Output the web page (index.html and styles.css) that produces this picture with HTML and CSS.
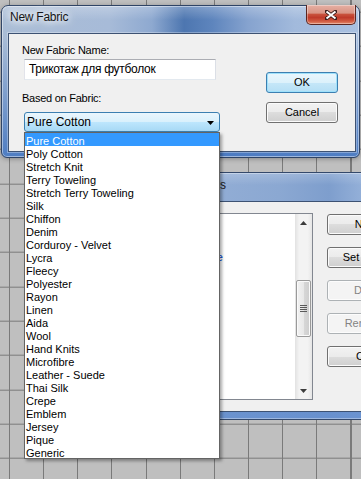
FILE: index.html
```html
<!DOCTYPE html>
<html lang="en">
<head>
<meta charset="utf-8">
<title>New Fabric</title>
<link rel="stylesheet" href="styles.css">
</head>
<body>
  <section class="win back">
    <div class="back-title">Custom Fabrics</div>
    <div class="back-client">
      <div class="listbox">
        <ul class="lb-items">
          <li>Pure Cotton</li>
          <li>Poly Cotton</li>
          <li class="lb-link">Stretch Crepe</li>
        </ul>
        <div class="vscroll">
          <div class="sb-btn"><svg width="7" height="4" viewBox="0 0 7 4"><path d="M3.5 0L7 4H0z" fill="#3c3c3c"/></svg></div>
          <div class="sb-track">
            <div class="sb-thumb"><svg width="7" height="8" viewBox="0 0 7 8"><path d="M0 .5h7M0 2.5h7M0 4.5h7M0 6.5h7" stroke="#5a5a5a" stroke-width="1"/></svg></div>
          </div>
          <div class="sb-btn"><svg width="7" height="4" viewBox="0 0 7 4"><path d="M0 0h7L3.5 4z" fill="#3c3c3c"/></svg></div>
        </div>
      </div>
      <div class="back-buttons">
        <button class="btn btn-wide">New...</button>
        <button class="btn btn-wide">Set Default</button>
        <button class="btn btn-wide" disabled>Delete</button>
        <button class="btn btn-wide" disabled>Rename...</button>
        <button class="btn btn-wide btn-close">Close</button>
      </div>
    </div>
  </section>

  <section class="win dialog">
    <div class="titlebar">
      <span class="title">New Fabric</span>
      <span class="close-x"><svg width="12" height="10" viewBox="0 0 12 10"><path d="M1.5 1.5L10.5 8.5M10.5 1.5L1.5 8.5" stroke="#3a1d1a" stroke-width="3.6" stroke-linecap="round"/><path d="M1.5 1.5L10.5 8.5M10.5 1.5L1.5 8.5" stroke="#fff" stroke-width="2"/></svg></span>
    </div>
    <div class="client">
      <div class="fields">
        <label class="lbl">New Fabric Name:</label>
        <div class="textbox">Трикотаж для футболок</div>
        <label class="lbl lbl-2">Based on Fabric:</label>
        <div class="combo"><span class="combo-text">Pure Cotton</span><svg width="7" height="4" viewBox="0 0 7 4"><path d="M0 0h7L3.5 4z" fill="#000"/></svg></div>
      </div>
      <div class="actions">
        <button class="btn btn-default">OK</button>
        <button class="btn">Cancel</button>
      </div>
    </div>
  </section>

  <ul class="droplist">
    <li class="sel">Pure Cotton</li>
    <li>Poly Cotton</li>
    <li>Stretch Knit</li>
    <li>Terry Toweling</li>
    <li>Stretch Terry Toweling</li>
    <li>Silk</li>
    <li>Chiffon</li>
    <li>Denim</li>
    <li>Corduroy - Velvet</li>
    <li>Lycra</li>
    <li>Fleecy</li>
    <li>Polyester</li>
    <li>Rayon</li>
    <li>Linen</li>
    <li>Aida</li>
    <li>Wool</li>
    <li>Hand Knits</li>
    <li>Microfibre</li>
    <li>Leather - Suede</li>
    <li>Thai Silk</li>
    <li>Crepe</li>
    <li>Emblem</li>
    <li>Jersey</li>
    <li>Pique</li>
    <li>Generic</li>
  </ul>
</body>
</html>
```

FILE: styles.css
```css
html, body {
  margin: 0;
  padding: 0;
}
body {
  width: 361px;
  height: 479px;
  overflow: hidden;
  position: relative;
  font-family: "Liberation Sans", Arial, sans-serif;
  color: #000;
  background-color: #bfbfbf;
  background-image:
    repeating-linear-gradient(90deg, #7a7a7a 0, #7a7a7a 1px, transparent 1px, transparent 34.15px),
    repeating-linear-gradient(180deg, #7a7a7a 0, #7a7a7a 1px, transparent 1px, transparent 34.33px);
  background-position: 9px 0, 0 11.7px;
}

.win {
  position: absolute;
  box-sizing: border-box;
}

/* ---------- back window ---------- */
.back {
  left: 131px;
  top: 172px;
  width: 330px;
  height: 248px;
  border: 1px solid #34496b;
  border-radius: 6px 6px 0 0;
  padding: 0 7px 7px;
  display: flex;
  flex-direction: column;
  background:
    linear-gradient(180deg, rgba(255,255,255,.2) 0, rgba(255,255,255,0) 12px),
    linear-gradient(180deg, rgba(100,142,206,0) 40px, rgba(100,142,206,.85) 220px),
    linear-gradient(90deg, #9ab3d8 0%, #8ba8d2 45%, #7e9ecd 60%, #a0badf 76%, #aac2e3 100%);
  box-shadow: inset 0 0 0 1px rgba(255,255,255,.35);
}
.back-title {
  flex: none;
  height: 28px;
  box-sizing: border-box;
  padding: 5px 0 0 3px;
  font-size: 12px;
  line-height: 15px;
  color: #1a1a1a;
  white-space: nowrap;
}
.back-client {
  flex: 1;
  border: 1px solid #3d5273;
  background: #f0f0f0;
  display: flex;
  gap: 14px;
  padding: 11px 0 11px 11px;
}
.listbox {
  flex: none;
  width: 162px;
  box-sizing: border-box;
  border: 1px solid #828790;
  background: #fff;
  display: flex;
}
.lb-items {
  flex: 1;
  margin: 0;
  padding: 1px 0 0 3px;
  list-style: none;
  font-size: 11px;
  line-height: 17px;
  white-space: nowrap;
  overflow: hidden;
}
.lb-link {
  color: #0046d5;
}
.vscroll {
  flex: none;
  width: 17px;
  display: flex;
  flex-direction: column;
  background: linear-gradient(90deg, #e2e2e2 0, #f3f3f3 25%, #f3f3f3 75%, #e6e6e6 100%);
}
.sb-btn {
  height: 17px;
  display: flex;
  align-items: center;
  justify-content: center;
}
.sb-track {
  flex: 1;
  padding-top: 49px;
}
.sb-thumb {
  height: 57px;
  margin: 0 1px;
  box-sizing: border-box;
  border: 1px solid #9a9a9a;
  border-radius: 2px;
  background: linear-gradient(90deg, #f2f2f2 0, #e8e8e8 50%, #d8d8d8 50%, #cdcdcd 100%);
  box-shadow: inset 0 0 0 1px #fafafa;
  display: flex;
  align-items: center;
  justify-content: center;
}
.back-buttons {
  flex: none;
  width: 86px;
  display: flex;
  flex-direction: column;
  gap: 12px;
  padding-top: 1px;
}
.btn-close {
  margin-top: auto;
}

/* ---------- buttons ---------- */
.btn {
  box-sizing: border-box;
  width: 72px;
  height: 21px;
  margin: 0;
  padding: 0;
  font-family: "Liberation Sans", Arial, sans-serif;
  font-size: 11px;
  line-height: 19px;
  color: #000;
  text-align: center;
  white-space: nowrap;
  border: 1px solid #707070;
  border-radius: 3px;
  background: linear-gradient(180deg, #f2f2f2 0, #ebebeb 50%, #dddddd 50%, #cfcfcf 100%);
  box-shadow: inset 0 0 0 1px #fbfbfb;
}
.btn-wide {
  width: 86px;
}
.btn:disabled {
  color: #838383;
  border-color: #adb2b5;
  background: #f4f4f4;
  box-shadow: inset 0 0 0 1px #fcfcfc;
}
.btn-default {
  border-color: #3c7fb1;
  background: linear-gradient(180deg, #e9f6fd 0, #dcf1fb 50%, #c6e7f8 50%, #b5dff5 100%);
  box-shadow: inset 0 0 0 1px #9fe1fb;
}

/* ---------- front dialog ---------- */
.dialog {
  left: 1px;
  top: 5px;
  width: 359px;
  height: 153px;
  border: 1px solid #2f4466;
  border-radius: 7px 7px 6px 6px;
  padding: 0 3px 5px 6px;
  display: flex;
  flex-direction: column;
  background:
    linear-gradient(180deg, rgba(255,255,255,.25) 0, rgba(255,255,255,0) 14px),
    linear-gradient(180deg, rgba(74,122,194,0) 30px, rgba(74,122,194,.95) 150px),
    linear-gradient(90deg, #aabdd6 0%, #a7bbd8 30%, #8ea9d0 42%, #4d76b0 51%, #5e85bd 59%, #86a3cf 69%, #a2badc 82%, #a9c0e0 100%);
  box-shadow: inset 0 0 0 1px rgba(255,255,255,.45), 0 1px 5px rgba(0,0,0,.3);
}
.titlebar {
  flex: none;
  height: 27px;
  display: flex;
  align-items: flex-start;
}
.title {
  padding: 4px 0 0 2px;
  font-size: 12px;
  line-height: 15px;
  letter-spacing: -0.25px;
  color: #161616;
  text-shadow: 0 0 6px #fff, 0 0 10px #fff, 0 0 14px rgba(255,255,255,.9);
}
.close-x {
  margin-left: auto;
  margin-top: -1px;
  width: 50px;
  height: 20px;
  box-sizing: border-box;
  border: 1px solid #5b2620;
  border-top: none;
  border-radius: 0 0 5px 5px;
  background: linear-gradient(180deg, #e6b0a4 0%, #d99484 42%, #c8503b 50%, #bf3a2a 66%, #d15a40 85%, #e48b6d 100%);
  box-shadow: inset 0 0 0 1px rgba(255,255,255,.35);
  display: flex;
  align-items: center;
  justify-content: center;
}
.client {
  flex: 1;
  border: 1px solid #3d5273;
  background: #f0f0f0;
  display: flex;
  justify-content: space-between;
  padding: 10px 17px 0 13px;
  box-shadow: 0 0 0 1px rgba(255,255,255,.3);
}
.fields {
  display: flex;
  flex-direction: column;
  align-items: flex-start;
}
.lbl {
  font-size: 11px;
  line-height: 13px;
  letter-spacing: -0.25px;
  white-space: nowrap;
}
.lbl-2 {
  margin-top: 12px;
}
.textbox {
  margin: 2px 0 0 2px;
  width: 192px;
  height: 21px;
  box-sizing: border-box;
  border: 1px solid;
  border-color: #abadb3 #dbdfe6 #e3e9ef #e2e3ea;
  background: #fff;
  padding: 0 4px;
  font-size: 12px;
  line-height: 19px;
  letter-spacing: -0.3px;
  white-space: nowrap;
}
.combo {
  margin: 7px 0 0 2px;
  width: 196px;
  height: 20px;
  box-sizing: border-box;
  border: 1px solid #3c7fb1;
  border-radius: 3px;
  padding: 1px 5px 0 2px;
  display: flex;
  align-items: center;
  justify-content: space-between;
  font-size: 12px;
  background: linear-gradient(180deg, #eaf6fd 0, #d9f0fc 50%, #bee6fd 50%, #a7d9f5 100%);
}
.combo-text {
  line-height: 17px;
}
.actions {
  display: flex;
  flex-direction: column;
  gap: 9px;
  padding-top: 28px;
}

/* ---------- drop-down list ---------- */
.droplist {
  position: absolute;
  left: 24px;
  top: 132px;
  width: 196px;
  margin: 0;
  padding: 0;
  list-style: none;
  box-sizing: border-box;
  border: 1px solid #646464;
  background: #fff;
  box-shadow: 2px 2px 3px rgba(0,0,0,.35);
  font-size: 11px;
}
.droplist li {
  height: 13px;
  line-height: 16px;
  padding-left: 1px;
  white-space: nowrap;
}
.droplist .sel {
  background: #3399ff;
  color: #fff;
}
```
